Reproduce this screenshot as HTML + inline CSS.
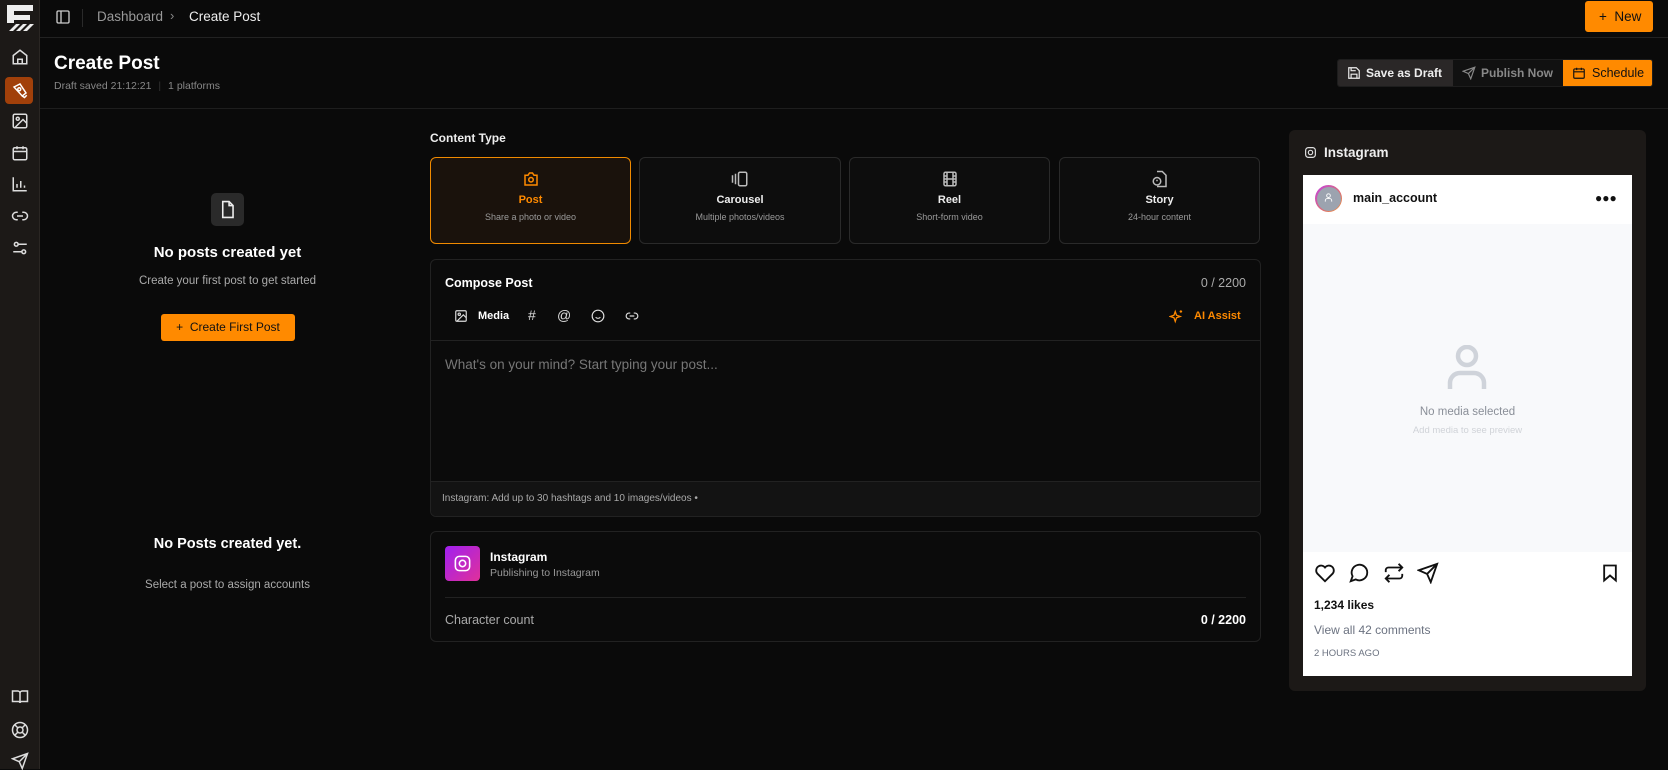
<!DOCTYPE html>
<html><head><meta charset="utf-8"><style>
*{box-sizing:border-box;margin:0;padding:0}
body{width:1668px;height:769px;overflow:hidden;background:#0a0a0a;font-family:"Liberation Sans",sans-serif;color:#fff;position:relative}
.a{position:absolute}
svg{display:block}
.sb{left:0;top:0;width:40px;height:769px;background:#1c1917;border-right:1px solid #2a2623}
.ic{position:absolute;left:11px;width:18px;height:18px}
.card{position:absolute;top:157px;height:87px;border:1px solid #2a2a2a;border-radius:6px;text-align:center;background:#0d0d0d}
.card .t{position:absolute;top:36px;width:100%;font-size:11px;font-weight:bold;color:#eee}
.card .s{position:absolute;top:54px;width:100%;font-size:9px;color:#9a9a9a}
.card svg{position:absolute;left:50%;top:12px;margin-left:-9px}
</style></head><body>
<div class="a sb">
 <svg class="a" style="left:5px;top:3px" width="30" height="30" viewBox="0 0 30 30"><path d="M2 2h26v6H9v4h16v5H9v3H2z" fill="#eee"/><path d="M4 28l7-7h4l-7 7zM11 28l7-7h4l-7 7zM18 28l7-7h4l-7 7z" fill="#eee"/></svg>
 <svg class="ic" style="top:48px" viewBox="0 0 24 24" fill="none" stroke="#ddd" stroke-width="2"><path d="M3 10l9-7 9 7v11H3z"/><path d="M9 21v-6h6v6"/></svg>
 <div class="a" style="left:5px;top:77px;width:28px;height:27px;background:#a1400a;border-radius:4px"></div>
 <svg class="ic" style="top:81px" viewBox="0 0 24 24" fill="none" stroke="#fff" stroke-width="2"><path d="M4 8l8-4 8 12-5 4z"/><circle cx="11" cy="11" r="2"/><path d="M15 20l3 2 3-3"/></svg>
 <svg class="ic" style="top:112px" viewBox="0 0 24 24" fill="none" stroke="#ddd" stroke-width="2"><rect x="3" y="3" width="18" height="18" rx="2"/><circle cx="9" cy="9" r="2"/><path d="M21 15l-5-5L5 21"/></svg>
 <svg class="ic" style="top:144px" viewBox="0 0 24 24" fill="none" stroke="#ddd" stroke-width="2"><rect x="3" y="5" width="18" height="16" rx="2"/><path d="M3 10h18M8 3v4M16 3v4"/></svg>
 <svg class="ic" style="top:175px" viewBox="0 0 24 24" fill="none" stroke="#ddd" stroke-width="2"><path d="M3 3v18h18M8 17v-5M13 17V8M18 17v-3"/></svg>
 <svg class="ic" style="top:207px" viewBox="0 0 24 24" fill="none" stroke="#ddd" stroke-width="2"><path d="M9 17H7a5 5 0 010-10h2M15 7h2a5 5 0 010 10h-2M8 12h8"/></svg>
 <svg class="ic" style="top:239px" viewBox="0 0 24 24" fill="none" stroke="#ddd" stroke-width="2"><circle cx="7" cy="7" r="2.5"/><circle cx="17" cy="17" r="2.5"/><path d="M3 17h11M10 7h11"/></svg>
 <svg class="ic" style="top:688px" viewBox="0 0 24 24" fill="none" stroke="#ddd" stroke-width="2"><path d="M2 4h7a3 3 0 013 3v13a2 2 0 00-2-2H2zM22 4h-7a3 3 0 00-3 3v13a2 2 0 012-2h8z"/></svg>
 <svg class="ic" style="top:721px" viewBox="0 0 24 24" fill="none" stroke="#ddd" stroke-width="2"><circle cx="12" cy="12" r="10"/><circle cx="12" cy="12" r="4"/><path d="M5 5l4 4M15 15l4 4M19 5l-4 4M9 15l-4 4"/></svg>
 <svg class="ic" style="top:752px" viewBox="0 0 24 24" fill="none" stroke="#ddd" stroke-width="2"><path d="M22 2L11 13M22 2l-7 20-4-9-9-4z"/></svg>
</div>
<div class="a" style="left:40px;top:37px;width:1628px;height:1px;background:#222"></div>
<svg class="a" style="left:55px;top:9px" width="16" height="16" viewBox="0 0 24 24" fill="none" stroke="#ccc" stroke-width="2"><rect x="3" y="3" width="18" height="18" rx="2"/><path d="M9 3v18"/></svg>
<div class="a" style="left:82px;top:9px;width:1px;height:18px;background:#2a2a2a"></div>
<div class="a" style="left:97px;top:9px;font-size:13.5px;color:#999">Dashboard</div>
<div class="a" style="left:170px;top:8px;font-size:13px;color:#888">›</div>
<div class="a" style="left:189px;top:9px;font-size:13.5px;color:#eee">Create Post</div>
<div class="a" style="left:1585px;top:1px;width:68px;height:31px;background:#ff8a00;border-radius:3px;color:#111;font-size:13.5px;line-height:31px;padding-left:14px">+&nbsp;&nbsp;New</div>
<div class="a" style="left:54px;top:53px;font-size:19px;font-weight:bold">Create Post</div>
<div class="a" style="left:54px;top:80px;font-size:10.5px;color:#888">Draft saved 21:12:21 <span style="color:#333;margin:0 4px">|</span> 1 platforms</div>
<div class="a" style="left:40px;top:108px;width:1628px;height:1px;background:#1e1e1e"></div>
<div class="a" style="left:1337px;top:59px;width:316px;height:28px;border-radius:3px;overflow:hidden;background:#111;border:1px solid #1d1d1d">
 <div class="a" style="left:0;top:0;width:115px;height:28px;background:#2a2727;font-size:12px;font-weight:bold;line-height:27px;padding-left:28px;color:#eee">Save as Draft</div>
 <svg class="a" style="left:9px;top:6px" width="14" height="14" viewBox="0 0 24 24" fill="none" stroke="#eee" stroke-width="2"><path d="M5 3h11l5 5v13H3V3z"/><path d="M7 3v5h8M7 21v-7h10v7"/></svg>
 <svg class="a" style="left:124px;top:6px" width="14" height="14" viewBox="0 0 24 24" fill="none" stroke="#888" stroke-width="2"><path d="M22 2L11 13M22 2l-7 20-4-9-9-4z"/></svg>
 <div class="a" style="left:143px;top:0;font-size:12px;font-weight:bold;line-height:27px;color:#888">Publish Now</div>
 <div class="a" style="left:225px;top:0;width:91px;height:28px;background:#ff8a00;font-size:12.5px;line-height:27px;padding-left:29px;color:#111">Schedule</div>
 <svg class="a" style="left:234px;top:6px" width="14" height="14" viewBox="0 0 24 24" fill="none" stroke="#111" stroke-width="2"><rect x="3" y="5" width="18" height="16" rx="2"/><path d="M3 10h18M8 3v4M16 3v4"/></svg>
</div>
<div class="a" style="left:211px;top:193px;width:33px;height:33px;background:#2a2a2a;border-radius:5px"></div>
<svg class="a" style="left:218px;top:200px" width="19" height="19" viewBox="0 0 24 24" fill="none" stroke="#eee" stroke-width="2"><path d="M6 2h8l5 5v15H6z"/><path d="M14 2v5h5"/></svg>
<div class="a" style="left:80px;width:295px;top:244px;text-align:center;font-size:15px;font-weight:bold">No posts created yet</div>
<div class="a" style="left:80px;width:295px;top:275px;text-align:center;font-size:11.5px;color:#aaa">Create your first post to get started</div>
<div class="a" style="left:161px;top:314px;width:134px;height:27px;background:#ff8a00;border-radius:3px;color:#111;font-size:12px;line-height:27px;text-align:center">+&nbsp; Create First Post</div>
<div class="a" style="left:80px;width:295px;top:536px;text-align:center;font-size:14.5px;font-weight:bold">No Posts created yet.</div>
<div class="a" style="left:80px;width:295px;top:579px;text-align:center;font-size:11.5px;color:#aaa">Select a post to assign accounts</div>
<div class="a" style="left:430px;top:131px;font-size:12px;font-weight:bold;color:#eee">Content Type</div>
<div class="card" style="left:430px;width:201px;border:1.5px solid #f08a00;background:#1a120c">
 <svg width="18" height="18" viewBox="0 0 24 24" fill="none" stroke="#ff8a00" stroke-width="2"><path d="M4 7h4l2-3h4l2 3h4v13H4z"/><circle cx="12" cy="13" r="3"/></svg>
 <div class="t" style="color:#ff8a00">Post</div><div class="s">Share a photo or video</div></div>
<div class="card" style="left:639px;width:202px">
 <svg width="18" height="18" viewBox="0 0 24 24" fill="none" stroke="#bbb" stroke-width="2"><rect x="10" y="3" width="11" height="18" rx="2"/><path d="M6 5v14M2 7v10"/></svg>
 <div class="t">Carousel</div><div class="s">Multiple photos/videos</div></div>
<div class="card" style="left:849px;width:201px">
 <svg width="18" height="18" viewBox="0 0 24 24" fill="none" stroke="#bbb" stroke-width="2"><rect x="4" y="3" width="16" height="18" rx="2"/><path d="M8 3v18M16 3v18M4 12h16M4 8h4M4 16h4M16 8h4M16 16h4"/></svg>
 <div class="t">Reel</div><div class="s">Short-form video</div></div>
<div class="card" style="left:1059px;width:201px">
 <svg width="18" height="18" viewBox="0 0 24 24" fill="none" stroke="#bbb" stroke-width="2"><path d="M8 2h7l5 5v15H8"/><circle cx="8" cy="15" r="5"/><path d="M8 13v2"/></svg>
 <div class="t">Story</div><div class="s">24-hour content</div></div>
<div class="a" style="left:430px;top:259px;width:831px;height:258px;border:1px solid #222;border-radius:6px;overflow:hidden;background:#0b0b0b">
 <div class="a" style="left:14px;top:16px;font-size:12.5px;font-weight:bold">Compose Post</div>
 <div class="a" style="right:14px;top:16px;font-size:12.5px;color:#aaa">0 / 2200</div>
 <svg class="a" style="left:23px;top:49px" width="14" height="14" viewBox="0 0 24 24" fill="none" stroke="#ddd" stroke-width="2"><rect x="3" y="3" width="18" height="18" rx="2"/><circle cx="9" cy="9" r="2"/><path d="M21 15l-5-5L5 21"/></svg>
 <div class="a" style="left:47px;top:50px;font-size:11px;font-weight:bold">Media</div>
 <div class="a" style="left:97px;top:47px;font-size:14px;color:#ddd">#</div>
 <div class="a" style="left:126px;top:47px;font-size:14px;color:#ddd">@</div>
 <svg class="a" style="left:160px;top:49px" width="14" height="14" viewBox="0 0 24 24" fill="none" stroke="#ddd" stroke-width="2"><circle cx="12" cy="12" r="10"/><path d="M8 14s1.5 2 4 2 4-2 4-2M9 9h.01M15 9h.01"/></svg>
 <svg class="a" style="left:194px;top:49px" width="14" height="14" viewBox="0 0 24 24" fill="none" stroke="#ddd" stroke-width="2"><path d="M9 17H7a5 5 0 010-10h2M15 7h2a5 5 0 010 10h-2M8 12h8"/></svg>
 <svg class="a" style="left:738px;top:49px" width="15" height="15" viewBox="0 0 24 24" fill="none" stroke="#ff8a00" stroke-width="2"><path d="M10 4l2 6 6 2-6 2-2 6-2-6-6-2 6-2zM19 2v4M17 4h4"/></svg>
 <div class="a" style="left:763px;top:50px;font-size:11px;font-weight:bold;color:#ff8a00">AI Assist</div>
 <div class="a" style="left:0;top:80px;width:100%;height:1px;background:#222"></div>
 <div class="a" style="left:14px;top:97px;font-size:13.5px;color:#777">What's on your mind? Start typing your post...</div>
 <div class="a" style="left:0;top:221px;width:100%;height:37px;background:#131313;border-top:1px solid #222"></div>
 <div class="a" style="left:11px;top:233px;font-size:10px;color:#aaa">Instagram: Add up to 30 hashtags and 10 images/videos •</div>
</div>
<div class="a" style="left:430px;top:531px;width:831px;height:111px;border:1px solid #222;border-radius:6px;background:#0b0b0b">
 <div class="a" style="left:14px;top:14px;width:35px;height:35px;border-radius:4px;background:linear-gradient(135deg,#a020f0,#e0309a)"></div>
 <svg class="a" style="left:22px;top:22px" width="19" height="19" viewBox="0 0 24 24" fill="none" stroke="#fff" stroke-width="2"><rect x="3" y="3" width="18" height="18" rx="5"/><circle cx="12" cy="12" r="4"/></svg>
 <div class="a" style="left:59px;top:18px;font-size:12px;font-weight:bold">Instagram</div>
 <div class="a" style="left:59px;top:35px;font-size:10.5px;color:#999">Publishing to Instagram</div>
 <div class="a" style="left:14px;top:65px;width:801px;height:1px;background:#222"></div>
 <div class="a" style="left:14px;top:81px;font-size:12.5px;color:#aaa">Character count</div>
 <div class="a" style="right:14px;top:81px;font-size:12.5px;font-weight:bold">0 / 2200</div>
</div>
<div class="a" style="left:1289px;top:130px;width:357px;height:561px;background:#1c1917;border-radius:6px"></div>
<svg class="a" style="left:1304px;top:146px" width="13" height="13" viewBox="0 0 24 24" fill="none" stroke="#ddd" stroke-width="2.2"><rect x="3" y="3" width="18" height="18" rx="5"/><circle cx="12" cy="12" r="4"/></svg>
<div class="a" style="left:1324px;top:145px;font-size:13.5px;font-weight:bold;color:#eee">Instagram</div>
<div class="a" style="left:1303px;top:175px;width:329px;height:501px;background:#fff">
 <div class="a" style="left:12px;top:10px;width:27px;height:27px;border-radius:50%;background:linear-gradient(135deg,#c040e0,#f09030);padding:1.5px"><div style="width:24px;height:24px;border-radius:50%;background:#9ca3af"></div></div>
 <svg class="a" style="left:20px;top:17px" width="11" height="11" viewBox="0 0 24 24" fill="none" stroke="#fff" stroke-width="2"><circle cx="12" cy="8" r="4"/><path d="M5 21v-2a5 5 0 015-5h4a5 5 0 015 5v2"/></svg>
 <div class="a" style="left:50px;top:16px;font-size:12.5px;font-weight:bold;color:#111">main_account</div>
 <div class="a" style="left:292px;top:16px;font-size:12px;font-weight:bold;color:#111;letter-spacing:0px">●●●</div>
 <div class="a" style="left:0;top:49px;width:329px;height:328px;background:#f8f9fb"></div>
 <svg class="a" style="left:144px;top:170px" width="40" height="46" viewBox="0 0 40 46" fill="none" stroke="#cfd3da" stroke-width="4.5"><circle cx="20" cy="11" r="9"/><path d="M3 44v-6a10 10 0 0110-10h14a10 10 0 0110 10v6"/></svg>
 <div class="a" style="left:0;width:329px;top:231px;text-align:center;font-size:11.5px;color:#8a8f98">No media selected</div>
 <div class="a" style="left:0;width:329px;top:250px;text-align:center;font-size:9.5px;color:#d0d3d8">Add media to see preview</div>
 <svg class="a" style="left:11px;top:387px" width="22" height="22" viewBox="0 0 24 24" fill="none" stroke="#111" stroke-width="2"><path d="M12 21l-8.5-8.5A5 5 0 0112 6a5 5 0 018.5 6.5z"/></svg>
 <svg class="a" style="left:45px;top:387px" width="22" height="22" viewBox="0 0 24 24" fill="none" stroke="#111" stroke-width="2"><path d="M21 11.5a8.5 8.5 0 01-12.5 7.5L3 21l2-5.5A8.5 8.5 0 1121 11.5z"/></svg>
 <svg class="a" style="left:80px;top:387px" width="22" height="22" viewBox="0 0 24 24" fill="none" stroke="#111" stroke-width="2"><path d="M17 2l4 4-4 4M3 11V9a3 3 0 013-3h15M7 22l-4-4 4-4M21 13v2a3 3 0 01-3 3H3"/></svg>
 <svg class="a" style="left:114px;top:387px" width="22" height="22" viewBox="0 0 24 24" fill="none" stroke="#111" stroke-width="2"><path d="M22 2L11 13M22 2l-7 20-4-9-9-4z"/></svg>
 <svg class="a" style="left:297px;top:387px" width="20" height="22" viewBox="0 0 24 24" fill="none" stroke="#111" stroke-width="2.2"><path d="M5 3h14v18l-7-6-7 6z"/></svg>
 <div class="a" style="left:11px;top:423px;font-size:12px;font-weight:bold;color:#111">1,234 likes</div>
 <div class="a" style="left:11px;top:448px;font-size:12px;color:#6b7280">View all 42 comments</div>
 <div class="a" style="left:11px;top:473px;font-size:9.5px;color:#6b7280">2 HOURS AGO</div>
</div>
</body></html>
